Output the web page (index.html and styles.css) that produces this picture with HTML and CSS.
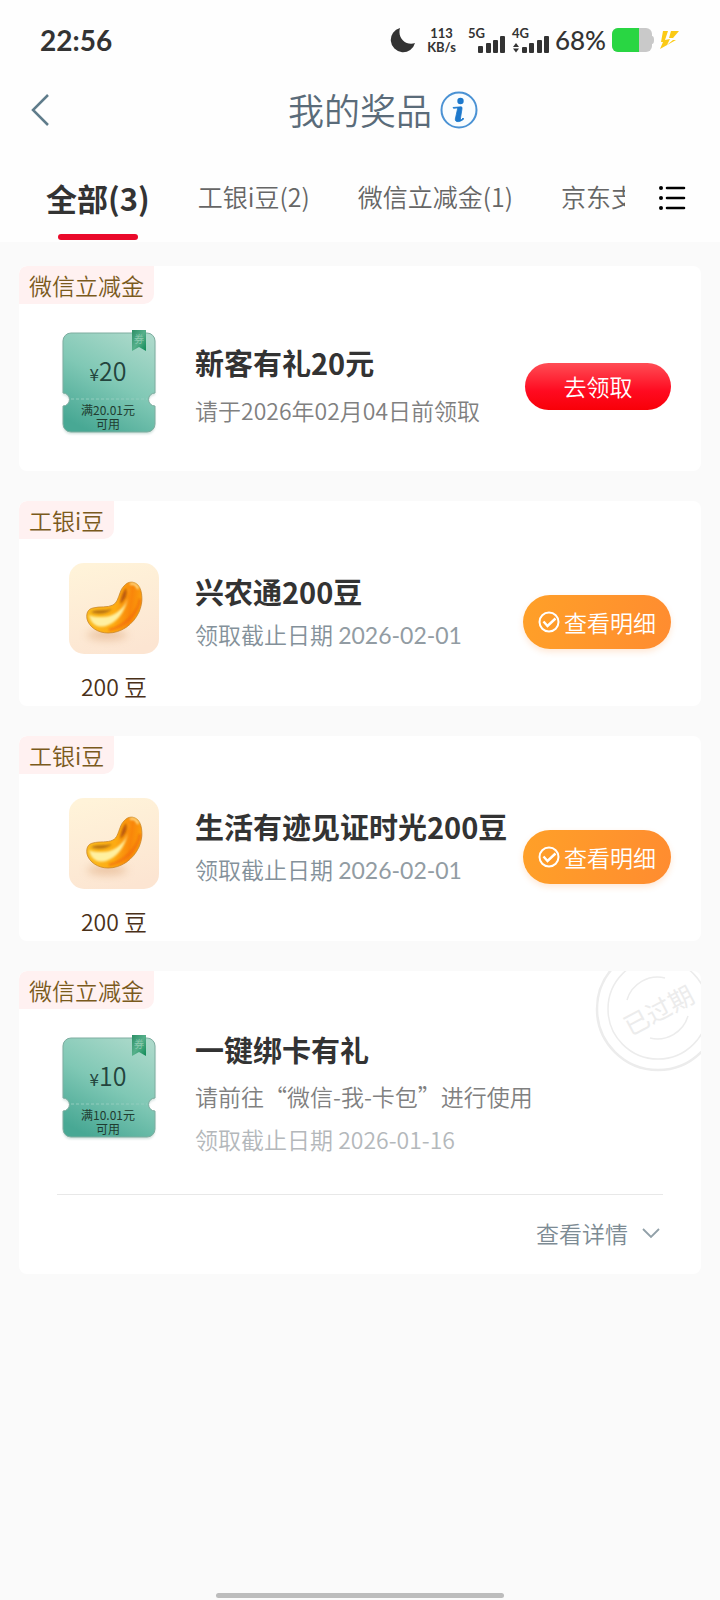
FILE: index.html
```html
<!DOCTYPE html>
<html lang="zh-CN">
<head>
<meta charset="utf-8">
<meta name="viewport" content="width=device-width, initial-scale=1">
<title>我的奖品</title>
<link rel="stylesheet" href="styles.css">
</head>
<body>
<svg class="defs" width="0" height="0" aria-hidden="true">
  <defs>
    <linearGradient id="ticketFill" x1="0.8" y1="0" x2="0.3" y2="1">
      <stop offset="0" stop-color="#abd9ca"/><stop offset="0.5" stop-color="#80c8b5"/><stop offset="1" stop-color="#48a894"/>
    </linearGradient>
    <linearGradient id="ribbonFill" x1="0" y1="0" x2="1" y2="1">
      <stop offset="0" stop-color="#2d8f66"/><stop offset="0.5" stop-color="#56b08b"/><stop offset="1" stop-color="#0d8a55"/>
    </linearGradient>
    <linearGradient id="tileFill" x1="0.3" y1="0" x2="0.6" y2="1">
      <stop offset="0" stop-color="#fff3d9"/><stop offset="1" stop-color="#fce5d2"/>
    </linearGradient>
    <linearGradient id="beanFill" x1="0.1" y1="0.6" x2="1" y2="0.7">
      <stop offset="0" stop-color="#fbb81c"/><stop offset="0.45" stop-color="#fdab12"/><stop offset="0.75" stop-color="#f9860a"/><stop offset="1" stop-color="#fca40c"/>
    </linearGradient>
    <filter id="soft" x="-30%" y="-30%" width="160%" height="160%"><feGaussianBlur stdDeviation="1"/></filter>
    <filter id="shade" x="-50%" y="-80%" width="200%" height="260%"><feGaussianBlur stdDeviation="4"/></filter>
    <symbol id="ticket" viewBox="0 0 108 116">
      <path d="M17 8h76a8 8 0 0 1 8 8v52a6.500 6.500 0 0 0 0 13v18a8 8 0 0 1-8 8H17a8 8 0 0 1-8-8V81a6.500 6.500 0 0 0 0-13V16a8 8 0 0 1 8-8z" fill="#7aa79b" opacity=".35" filter="url(#soft)" transform="translate(0 2)"/>
      <path d="M17 8h76a8 8 0 0 1 8 8v52a6.500 6.500 0 0 0 0 13v18a8 8 0 0 1-8 8H17a8 8 0 0 1-8-8V81a6.500 6.500 0 0 0 0-13V16a8 8 0 0 1 8-8z" fill="url(#ticketFill)" stroke="#7eada0" stroke-width="1"/>
      <path d="M17 74h76" stroke="#93cdbe" stroke-width="1" stroke-dasharray="3 2"/>
      <path d="M78 5h14v21l-7-4-7 4z" fill="url(#ribbonFill)"/>
    </symbol>
    <symbol id="bean" viewBox="0 0 90 91">
      <rect width="90" height="91" rx="15" fill="url(#tileFill)"/>
      <ellipse cx="38" cy="72" rx="20" ry="5" fill="#d99f70" opacity=".5" filter="url(#shade)"/>
      <path d="M55 23c4-5 10-5 14-1 5 6 5 18 1 27-6 13-18 21-31 21-10 0-19-6-21-14-1-6 1-10 6-11 7-2 14 0 20-3 4-2 5-7 7-12 1-3 2-5 4-7z" fill="url(#beanFill)" stroke="#c9862a" stroke-width=".8"/>
      <path d="M59 25c1 8-1 15-6 20-6 6-12 9-20 9-5 0-9 0-13-2 2 10 9 13 17 11 10-3 18-13 21-25 1-5 2-10 1-13z" fill="#fff0a0" filter="url(#soft)"/>
      <path d="M57 25c-4 5-5 11-6 16 5-4 8-9 6-16z" fill="#b95808" filter="url(#soft)"/>
      <path d="M22 49c7-3 13-1 21-3-4 5-15 6-21 3z" fill="#b87312" filter="url(#soft)"/>
      <path d="M71 36c-2 14-14 27-31 31" fill="none" stroke="#ef6509" stroke-width="3" opacity=".6" filter="url(#soft)"/>
      <path d="M61 21c4-1 7 1 8 5" fill="none" stroke="#ffe89a" stroke-width="2" filter="url(#soft)"/>
    </symbol>
    <symbol id="check" viewBox="0 0 22 22">
      <circle cx="11" cy="11" r="9.500" fill="none" stroke="currentColor" stroke-width="2"/>
      <path d="M5.500 10.500l4 4.500 8-7.500" fill="none" stroke="currentColor" stroke-width="2.400"/>
    </symbol>
  </defs>
</svg>
<div class="page">
  <header class="top">
    <div class="status">
      <span class="time">22:56</span>
      <div class="indicators">
        <svg class="moon" width="26" height="26" viewBox="0 0 26 26" aria-hidden="true"><path d="M10 1A12.300 12.300 0 1 0 25 16C17 19 7 12 10 1z" fill="#333"/></svg>
        <span class="speed"><span>113</span><span>KB/s</span></span>
        <span class="cell"><span class="gen">5G</span>
          <svg width="28" height="17" viewBox="0 0 28 17" aria-hidden="true" fill="#333"><rect x="0" y="10" width="5" height="7" rx="1"/><rect x="8" y="7" width="5" height="10" rx="1"/><rect x="15" y="4" width="5" height="13" rx="1"/><rect x="22" y="0" width="5" height="17" rx="1"/></svg>
        </span>
        <span class="cell"><span class="gen">4G</span>
          <svg width="37" height="17" viewBox="0 0 37 17" aria-hidden="true" fill="#333"><path d="M1 11l3-4 3 4zM1 12.500l3 4 3-4z"/><rect x="10" y="11" width="5" height="6" rx="1"/><rect x="17" y="7" width="5" height="10" rx="1"/><rect x="25" y="4" width="5" height="13" rx="1"/><rect x="32" y="0" width="5" height="17" rx="1"/></svg>
        </span>
        <span class="percent">68%</span>
        <svg width="42" height="24" viewBox="0 0 42 24" aria-hidden="true"><rect width="40" height="24" rx="6" fill="#c9c9c9"/><path d="M6 0h21v24H6a6 6 0 0 1-6-6V6a6 6 0 0 1 6-6z" fill="#29d643"/><path d="M40 8q2 0 2 4t-2 4z" fill="#c9c9c9"/></svg>
        <svg width="20" height="20" viewBox="0 0 20 20" aria-hidden="true"><path d="M3 1h5L5 10l5-1-3 6 6-5h3L0 19l3-7H1z" fill="#fbca16"/><path d="M11 1h8l-6 7h-4z" fill="#fbca16"/></svg>
      </div>
    </div>
    <div class="titlebar">
      <button class="back" type="button" aria-label="返回"><svg width="20" height="34" viewBox="0 0 20 34"><path d="M18 2L3 17l15 15" fill="none" stroke="#5f7c8b" stroke-width="2.500"/></svg></button>
      <h1 class="heading">我的奖品</h1>
      <button class="info" type="button" aria-label="说明"><svg width="38" height="38" viewBox="0 0 38 38"><circle cx="19" cy="19" r="17.500" fill="#f9fdff" stroke="#4a92d4" stroke-width="2"/><circle cx="20.500" cy="10" r="3.200" fill="#1b78cc"/><path d="M13 16.500l8-.7q1.500 0 1 2L20.500 27q-.5 2 1 1.500l1.500-1.500.8 1c-3 3-9 4-8.500 0l2.200-10q.2-1-1-1l-3 .3z" fill="#1b78cc" stroke="#1b78cc" stroke-width=".8"/></svg></button>
    </div>
    <nav class="tabs">
      <div class="tablist">
        <a class="tab active" href="#all">全部(3)</a>
        <a class="tab" href="#beans">工银i豆(2)</a>
        <a class="tab" href="#wechat">微信立减金(1)</a>
        <a class="tab" href="#jd">京东支付</a>
      </div>
      <button class="menu" type="button" aria-label="全部分类"><svg width="28" height="26" viewBox="0 0 28 26"><g fill="#000"><circle cx="3" cy="3" r="2"/><circle cx="3" cy="13" r="2"/><circle cx="3" cy="23" r="2"/></g><path d="M9 3h17M9 13h17M9 23h17" stroke="#000" stroke-width="2.600" stroke-linecap="round"/></svg></button>
    </nav>
  </header>

  <main class="cards">
    <article class="card">
      <span class="tag">微信立减金</span>
      <div class="row">
        <div class="coupon">
          <svg class="art" aria-hidden="true"><use href="#ticket"/></svg>
          <span class="seal">券</span>
          <span class="amount"><small>¥</small>20</span>
          <span class="rule">满20.01元<br>可用</span>
        </div>
        <div class="text claim">
          <h2 class="name">新客有礼20元</h2>
          <p class="note">请于2026年02月04日前领取</p>
        </div>
        <button class="btn red" type="button">去领取</button>
      </div>
    </article>

    <article class="card">
      <span class="tag">工银i豆</span>
      <div class="row">
        <div class="beans"><svg width="90" height="91" aria-hidden="true"><use href="#bean"/></svg><span class="count">200 豆</span></div>
        <div class="text beaninfo">
          <h2 class="name">兴农通200豆</h2>
          <p class="note cool">领取截止日期 <span class="date">2026-02-01</span></p>
        </div>
        <button class="btn orange" type="button"><svg width="22" height="22" aria-hidden="true"><use href="#check"/></svg>查看明细</button>
      </div>
    </article>

    <article class="card">
      <span class="tag">工银i豆</span>
      <div class="row">
        <div class="beans"><svg width="90" height="91" aria-hidden="true"><use href="#bean"/></svg><span class="count">200 豆</span></div>
        <div class="text beaninfo">
          <h2 class="name">生活有迹见证时光200豆</h2>
          <p class="note cool">领取截止日期 <span class="date">2026-02-01</span></p>
        </div>
        <button class="btn orange" type="button"><svg width="22" height="22" aria-hidden="true"><use href="#check"/></svg>查看明细</button>
      </div>
    </article>

    <article class="card">
      <span class="tag">微信立减金</span>
      <div class="stamp">
        <svg width="126" height="126" viewBox="0 0 126 126" fill="none" stroke="#ececec" aria-hidden="true"><circle cx="63" cy="63" r="61" stroke-width="2.500"/><circle cx="63" cy="63" r="50" stroke-width="1.500"/><path d="M32 54a32 32 0 0 1 38-22M93 70a32 32 0 0 1-38 22" stroke-width="1.500"/></svg>
        <span class="stamptext">已过期</span>
      </div>
      <div class="row">
        <div class="coupon">
          <svg class="art" aria-hidden="true"><use href="#ticket"/></svg>
          <span class="seal">券</span>
          <span class="amount"><small>¥</small>10</span>
          <span class="rule">满10.01元<br>可用</span>
        </div>
        <div class="text expired">
          <h2 class="name">一键绑卡有礼</h2>
          <p class="note">请前往“微信-我-卡包”进行使用</p>
          <p class="note faded">领取截止日期 2026-01-16</p>
        </div>
      </div>
      <div class="more"><button class="detail" type="button">查看详情<svg width="18" height="12" viewBox="0 0 18 12" aria-hidden="true"><path d="M1 2l8 8 8-8" fill="none" stroke="#91a0a8" stroke-width="1.800"/></svg></button></div>
    </article>
  </main>
  <div class="homebar"></div>
</div>
</body>
</html>
```
FILE: styles.css
```css
* { box-sizing: border-box; }
body {
  margin: 0;
  background: #fafafa;
  color: #333;
  font-family: "Noto Sans CJK SC", sans-serif;
  font-weight: 350;
}
h1, h2, p { margin: 0; }
button { border: 0; padding: 0; background: none; font: inherit; color: inherit; }
svg { display: block; flex: none; }
.defs { position: absolute; }
.page { min-height: 100vh; display: flex; flex-direction: column; }

.top { background: #fefefe; }
.status {
  height: 80px;
  padding: 0 40px;
  display: flex;
  align-items: center;
  justify-content: space-between;
  font-family: Lato, sans-serif;
  font-weight: 700;
}
.time { font-size: 28px; }
.indicators { display: flex; align-items: center; gap: 6px; }
.speed {
  display: flex;
  flex-direction: column;
  align-items: center;
  font-size: 13px;
  line-height: 14px;
  margin: 0 6px 0 5px;
}
.cell { display: flex; flex-direction: column; align-items: flex-end; position: relative; padding: 8px 0 0 10px; }
.cell + .cell { padding-left: 0; }
.gen { position: absolute; left: 0; top: -1px; font-size: 13px; line-height: 13px; }
.percent { font-size: 26px; font-weight: 500; }

.titlebar {
  height: 60px;
  padding: 0 30px;
  display: grid;
  grid-template-columns: 1fr auto 1fr;
  align-items: center;
  column-gap: 8px;
}
.heading { font-size: 36px; line-height: 50px; padding-bottom: 3px; font-weight: 350; color: #5a6b79; }

.tabs { height: 102px; display: flex; align-items: flex-start; justify-content: space-between; padding: 27px 34px 0 46px; }
.tablist { flex: 1; min-width: 0; display: flex; gap: 48px; overflow: hidden; }
.tab {
  flex: none;
  font-size: 25px;
  line-height: 58px;
  color: #666;
  text-decoration: none;
  white-space: nowrap;
}
.tab.active { font-size: 31px; line-height: 62px; font-weight: 700; color: #333; }
.tab.active::after {
  content: "";
  display: block;
  width: 80px;
  height: 6px;
  margin: 5px auto 0;
  border-radius: 3px;
  background: #ea0a2a;
}
.menu { margin: 18px 0 0 33px; }

.cards { padding: 24px 19px; display: flex; flex-direction: column; gap: 30px; }
.card { position: relative; min-height: 205px; background: #fff; border-radius: 8px; overflow: hidden; }
.tag {
  display: block;
  width: fit-content;
  padding: 0 10px;
  border-radius: 8px 0 10px 0;
  background: #fff1f1;
  color: #7a5a1c;
  font-size: 23px;
  line-height: 38px;
}
.row { display: flex; align-items: flex-start; padding-right: 30px; }
.text { flex: 1; min-width: 0; display: flex; flex-direction: column; white-space: nowrap; }
.claim { padding-top: 38px; gap: 12px; }
.beaninfo { padding-top: 32px; gap: 7px; }
.expired { padding-top: 20px; gap: 11px; }
.name { font-size: 29px; line-height: 40px; font-weight: 700; }
.note { font-size: 23px; line-height: 32px; color: #808080; }
.cool { color: #84919a; }
.faded { color: #b4b8bb; }
.date { font-family: Lato, "Noto Sans CJK SC", sans-serif; font-weight: 400; color: #929ca3; }

.coupon {
  position: relative;
  width: 108px;
  height: 116px;
  margin: 21px 33px 0 35px;
  display: flex;
  flex-direction: column;
  align-items: center;
  color: #23443d;
}
.art { position: absolute; inset: 0; width: 100%; height: 100%; }
.seal { position: absolute; left: 80px; top: 8px; font-size: 10px; line-height: 12px; color: #8fcbb1; }
.amount { position: relative; padding-top: 27px; font-size: 25px; line-height: 36px; }
.amount small { font-size: 17px; font-weight: 400; }
.rule { position: relative; margin-top: 11px; font-size: 12px; line-height: 14px; font-weight: 400; text-align: center; color: #203c30; }

.beans { width: 90px; margin: 24px 36px 0 50px; display: flex; flex-direction: column; align-items: center; gap: 15px; }
.count { font-size: 23px; line-height: 34px; color: #4a3018; white-space: nowrap; }

.btn {
  flex: none;
  width: 146px;
  height: 47px;
  margin-top: 59px;
  padding-bottom: 2px;
  border-radius: 27px;
  color: #fff;
  font-size: 23px;
  display: flex;
  align-items: center;
  justify-content: center;
  gap: 4px;
}
.red { background: linear-gradient(#ff4d55, #ff0a20 60%, #f80008); }
.orange { width: 148px; height: 54px; margin-top: 56px; padding: 0; background: linear-gradient(100deg, #ffa028, #ff8c30); box-shadow: 0 3px 6px #ff8c3033; }

.stamp { position: absolute; right: -20px; top: -25px; width: 126px; height: 126px; }
.stamptext {
  position: absolute;
  inset: 0;
  display: flex;
  align-items: center;
  justify-content: center;
  font-size: 25px;
  font-weight: 400;
  color: #ececec;
  transform: rotate(-28deg);
}
.more {
  margin: 39px 38px 0;
  padding: 18px 3px 21px;
  border-top: 1px solid #e8e8e8;
  display: flex;
  justify-content: flex-end;
}
.detail { display: flex; align-items: center; gap: 14px; font-size: 23px; line-height: 40px; color: #7d8b94; }

.homebar { width: 40%; height: 5px; margin: auto auto 2px; border-radius: 3px; background: #bcbcbc; }
```
